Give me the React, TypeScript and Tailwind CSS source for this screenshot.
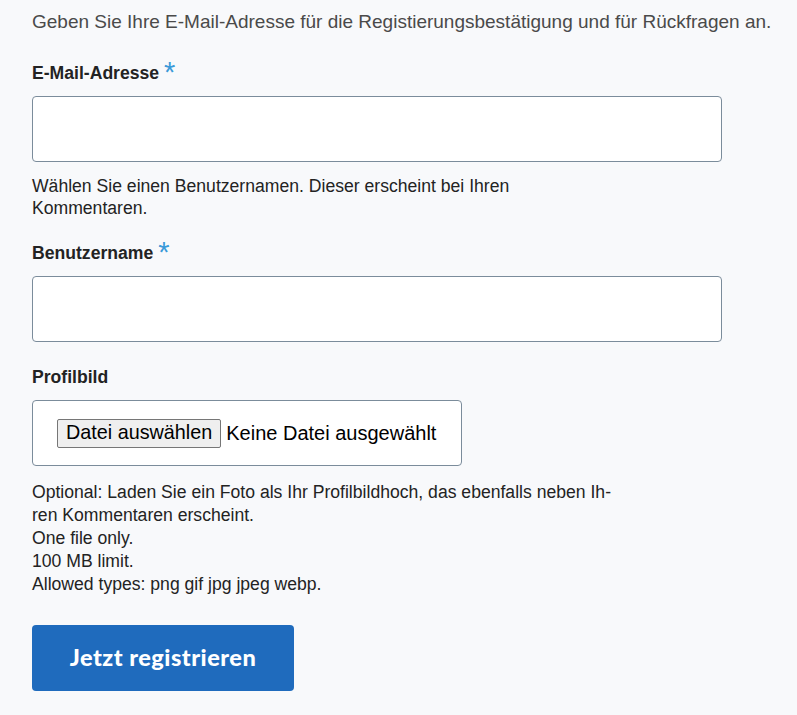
import React from 'react';

function Asterisk() {
  return <span className="ml-[5px] align-[-3px] text-[29px] font-normal leading-[0px] text-[#3a9ad9]">*</span>;
}

export default function App() {
  return (
    <div className="min-h-screen bg-[#f8f9fb] px-8 pt-[10px] font-['Liberation_Sans',Arial,sans-serif] text-[#232323]">
      {/* Intro */}
      <p className="whitespace-nowrap text-[19px] leading-6 text-[#4a4a4a]">
        Geben Sie Ihre E-Mail-Adresse für die Registierungsbestätigung und für Rückfragen an.
      </p>

      {/* E-Mail */}
      <label className="mt-[27px] block h-6 text-[17.6px] font-bold leading-6">
        E-Mail-Adresse
        <Asterisk />
      </label>
      <input
        type="email"
        className="mt-[11px] block h-[66px] w-[690px] rounded-[4px] border border-[#7b8c9b] bg-white px-3 outline-none"
      />
      <p className="mt-[13px] text-[17.6px] leading-[22px]">
        Wählen Sie einen Benutzernamen. Dieser erscheint bei Ihren
        <br />
        Kommentaren.
      </p>

      {/* Benutzername */}
      <label className="mt-[22px] block h-6 text-[17.6px] font-bold leading-6">
        Benutzername
        <Asterisk />
      </label>
      <input
        type="text"
        className="mt-[11px] block h-[66px] w-[690px] rounded-[4px] border border-[#7b8c9b] bg-white px-3 outline-none"
      />

      {/* Profilbild */}
      <label className="mt-[23px] block h-6 text-[17.6px] font-bold leading-6">Profilbild</label>
      <div className="mt-[11px] flex h-[66px] w-[430px] items-center rounded-[4px] border border-[#7b8c9b] bg-white pl-6">
        <button className="h-[29px] rounded-[2px] border border-[#767676] bg-[#efefef] px-[8px] text-[19.8px] leading-none text-black">
          Datei auswählen
        </button>
        <span className="ml-[5px] text-[20px] text-black">Keine Datei ausgewählt</span>
      </div>
      <p className="mt-[15px] text-[17.6px] leading-[23px]">
        Optional: Laden Sie ein Foto als Ihr Profilbildhoch, das ebenfalls neben Ih-
        <br />
        ren Kommentaren erscheint.
        <br />
        One file only.
        <br />
        100 MB limit.
        <br />
        Allowed types: png gif jpg jpeg webp.
      </p>

      {/* Submit */}
      <button className="mt-[29px] h-[66px] w-[262px] rounded-[4px] bg-[#1f6bbd] font-['Lato',sans-serif] text-[23.5px] font-black tracking-[0.5px] text-white">
        Jetzt registrieren
      </button>
    </div>
  );
}
